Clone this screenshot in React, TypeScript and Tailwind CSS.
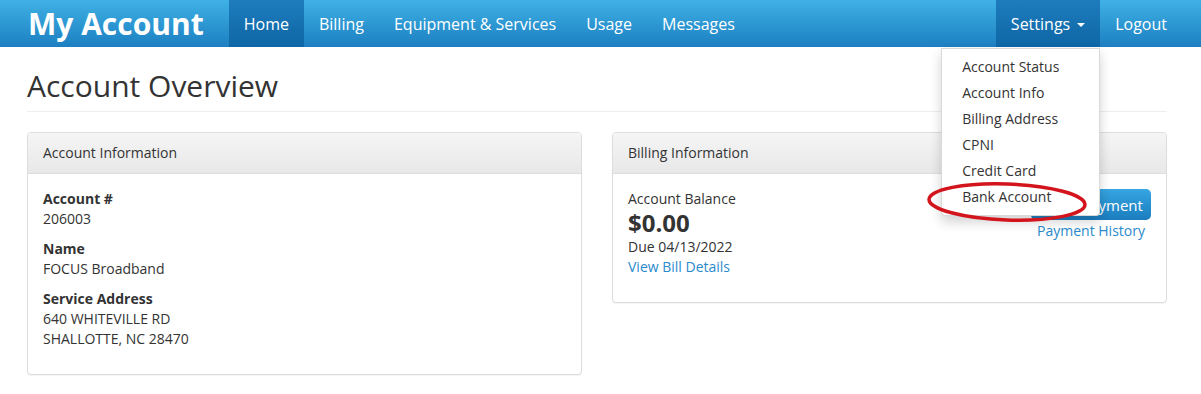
import React from "react";

const navItems = ["Home", "Billing", "Equipment & Services", "Usage", "Messages"];
const settingsItems = [
  "Account Status",
  "Account Info",
  "Billing Address",
  "CPNI",
  "Credit Card",
  "Bank Account",
];

function Panel({ title, children }: { title: string; children: React.ReactNode }) {
  return (
    <div className="rounded-[4px] border border-[#dddddd] bg-white shadow-[0_1px_1px_rgba(0,0,0,0.05)]">
      <div className="rounded-t-[3px] border-b border-[#dddddd] bg-[linear-gradient(#f5f5f5,#e8e8e8)] px-[15px] py-[10px] text-[14px] leading-[20px] text-[#333]">
        {title}
      </div>
      <div className="p-[15px]">{children}</div>
    </div>
  );
}

function Field({ label, lines }: { label: string; lines: string[] }) {
  return (
    <div className="mb-[10px]">
      <div className="font-bold text-[#333]">{label}</div>
      {lines.map((l) => (
        <div key={l}>{l}</div>
      ))}
    </div>
  );
}

export default function App() {
  return (
    <div className="relative min-h-[394px] bg-white font-['Open_Sans',sans-serif] text-[14px] leading-[20px] text-[#333]">
      <nav className="h-[47px] bg-[linear-gradient(#3fb1e5,#1c7fc1)]">
        <div className="flex h-full w-[1182px] justify-between pl-[28px]">
          <div className="flex h-full items-center">
            <span className="mr-[25px] text-[30px] font-bold leading-none text-white">
              My Account
            </span>
            <ul className="flex h-full">
              {navItems.map((item, i) => (
                <li
                  key={item}
                  className={
                    i === 0
                      ? "flex h-full items-center bg-[linear-gradient(#1e7cbd,#0e66a5)] px-[15px] text-[16px] text-white"
                      : "flex h-full items-center px-[15px] text-[16px] text-white"
                  }
                >
                  {item}
                </li>
              ))}
            </ul>
          </div>
          <ul className="flex h-full">
            <li className="relative flex h-full items-center bg-[linear-gradient(#1e7cbd,#0e66a5)] px-[15px] text-[16px] text-white">
              Settings
              <span className="ml-[7px] mt-[2px] inline-block h-0 w-0 border-x-[4px] border-t-[4px] border-x-transparent border-t-white" />
              <div className="absolute right-0 top-[48px] z-20 w-[159px] rounded-b-[4px] border border-[rgba(0,0,0,0.15)] bg-white py-[5px] text-[14px] leading-[20px] text-[#333] shadow-[0_6px_12px_rgba(0,0,0,0.175)]">
                {settingsItems.map((s) => (
                  <div key={s} className="px-[20px] py-[3px]">
                    {s}
                  </div>
                ))}
              </div>
            </li>
            <li className="flex h-full items-center px-[15px] text-[16px] text-white">Logout</li>
          </ul>
        </div>
      </nav>

      <main className="w-[1167px] pl-[27px]">
        <h1 className="mt-[22px] border-b border-[#eeeeee] pb-[9px] text-[30px] leading-[33px] text-[#333]">
          Account Overview
        </h1>

        <div className="mt-[20px] grid grid-cols-[555px_555px] items-start gap-[30px]">
          <Panel title="Account Information">
            <Field label="Account #" lines={["206003"]} />
            <Field label="Name" lines={["FOCUS Broadband"]} />
            <Field label="Service Address" lines={["640 WHITEVILLE RD", "SHALLOTTE, NC 28470"]} />
          </Panel>

          <Panel title="Billing Information">
            <div className="flex justify-between">
              <div className="mb-[10px]">
                <div>Account Balance</div>
                <div className="text-[24px] font-bold leading-[28px]">$0.00</div>
                <div>Due 04/13/2022</div>
                <div className="text-[#2a8acc]">View Bill Details</div>
              </div>
              <div className="flex flex-col items-center">
                <div className="flex h-[31px] w-[120px] items-center justify-center rounded-[5px] bg-[linear-gradient(#36a5e1,#1b7dbf)] text-[15px] text-white">
                  Make Payment
                </div>
                <div className="mt-[1px] text-[#2a8acc]">Payment History</div>
              </div>
            </div>
          </Panel>
        </div>
      </main>

      <svg
        className="pointer-events-none absolute left-[924px] top-[177px] z-30"
        width="170"
        height="52"
        viewBox="0 0 170 52"
      >
        <ellipse
          cx="83"
          cy="25"
          rx="78"
          ry="18"
          fill="none"
          stroke="#d3141c"
          strokeWidth="3.5"
          transform="rotate(2 83 25)"
        />
      </svg>
    </div>
  );
}
